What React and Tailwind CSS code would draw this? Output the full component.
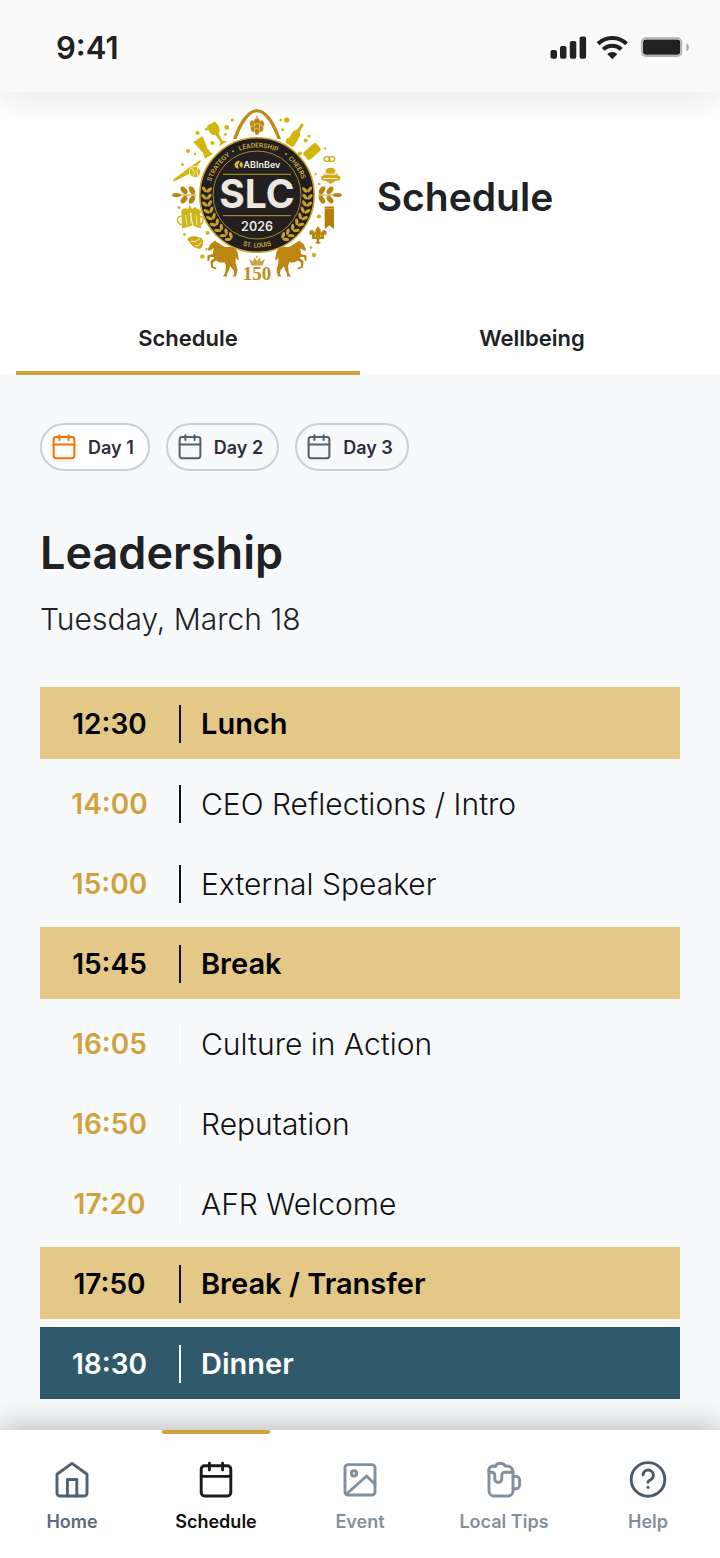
import React, { useState } from 'react';
import clsx from 'clsx';

const tabs = ['Schedule', 'Wellbeing'];
const days = ['Day 1', 'Day 2', 'Day 3'];

const sessions = [
    { time: '12:30', title: 'Lunch', type: 'break' },
    { time: '14:00', title: 'CEO Reflections / Intro', type: 'talk' },
    { time: '15:00', title: 'External Speaker', type: 'talk' },
    { time: '15:45', title: 'Break', type: 'break' },
    { time: '16:05', title: 'Culture in Action', type: 'talk', faint: true },
    { time: '16:50', title: 'Reputation', type: 'talk', faint: true },
    { time: '17:20', title: 'AFR Welcome', type: 'talk', faint: true },
    { time: '17:50', title: 'Break / Transfer', type: 'break' },
    { time: '18:30', title: 'Dinner', type: 'dinner' },
];

function Icon({ className, children }) {
    return (
        <svg viewBox="0 0 40 40" className={className} fill="none" stroke="currentColor" strokeWidth="2.9" strokeLinecap="round" strokeLinejoin="round" aria-hidden="true">
            {children}
        </svg>
    );
}

function HomeIcon({ className }) {
    return (
        <Icon className={className}>
            <path d="M5 14.2 20 3.4l15 10.800V33a3 3 0 0 1-3 3H8a3 3 0 0 1-3-3Z" />
            <path d="M15.4 36V19.500h9.400V36" />
        </Icon>
    );
}

function CalendarIcon({ className }) {
    return (
        <Icon className={className}>
            <rect x="5.2" y="5.8" width="29.6" height="30.2" rx="3.4" />
            <path d="M5.2 16.4h29.6M13.4 3.2v6.8M26.6 3.2v6.8" />
        </Icon>
    );
}

function ImageIcon({ className }) {
    return (
        <Icon className={className}>
            <rect x="5" y="4.6" width="30" height="30.4" rx="3" />
            <circle cx="14" cy="13.4" r="2.6" />
            <path d="M6.5 34 26.6 16l8.4 8.2" />
        </Icon>
    );
}

function BeerIcon({ className }) {
    return (
        <Icon className={className}>
            <path d="M5 12.2V31a5 5 0 0 0 5 5h14a5 5 0 0 0 5-5V12.2" />
            <path d="M29 16.400h3a3.600 3.600 0 0 1 3.600 3.600V25a3.800 3.800 0 0 1-3.800 3.800H29" />
            <path d="M5 12.2a4.600 4.600 0 0 1 4-6.200c1.200 0 1.800.2 2.400.5C12.300 4.200 14.200 3.200 16.300 3.200c2.200 0 4 1.200 4.900 2.900 3-.6 7.300.6 7.800 6.100h-8.200a3 3 0 0 0-3 3V19a3.500 3.500 0 0 1-7 0v-3.800a3 3 0 0 0-3-3Z" />
        </Icon>
    );
}

function HelpIcon({ className }) {
    return (
        <Icon className={className}>
            <circle cx="20" cy="19.4" r="16.8" />
            <path d="M15 14.800a5.200 5.200 0 1 1 7.600 5c-1.800.8-2.600 1.300-2.600 2.400" />
            <circle cx="20" cy="27.400" r="1.600" fill="currentColor" stroke="none" />
        </Icon>
    );
}

const navItems = [
    { label: 'Home', icon: HomeIcon, iconColor: 'text-[#50606e]', color: 'text-[#5c6b78]' },
    { label: 'Schedule', icon: CalendarIcon, iconColor: 'text-[#1a1a1c]', color: 'text-[#111113]' },
    { label: 'Event', icon: ImageIcon, iconColor: 'text-[#82909d]', color: 'text-[#82909d]' },
    { label: 'Local Tips', icon: BeerIcon, iconColor: 'text-[#82909d]', color: 'text-[#82909d]' },
    { label: 'Help', icon: HelpIcon, iconColor: 'text-[#4d5b68]', color: 'text-[#82909d]' },
];

function StatusBar() {
    return (
        <div className="relative z-10 flex h-23 items-center justify-between bg-[#fafafa] pt-1 pr-7 pl-14 text-[#202122] shadow-[0_8px_32px_rgba(0,0,0,0.09)]">
            <span className="text-[31px] leading-10 font-semibold">9:41</span>
            <svg viewBox="0 0 142 24" className="h-6 w-[142px]" fill="currentColor" aria-hidden="true">
                <rect x="0.5" y="14" width="6.5" height="8.8" rx="2" />
                <rect x="10" y="10" width="6.5" height="12.8" rx="2" />
                <rect x="19.8" y="5" width="6.5" height="17.8" rx="2" />
                <rect x="29.6" y="0.4" width="6.5" height="22.4" rx="2" />
                <g fill="none" stroke="currentColor" strokeWidth="4">
                    <path d="M48 7.800a20.500 20.500 0 0 1 28.600 0" />
                    <path d="M53.300 13.400a13 13 0 0 1 18 0" />
                </g>
                <path d="M57.200 18a7.600 7.600 0 0 1 10.200 0l-5.100 5.200Z" />
                <rect x="91.8" y="2.200" width="39.6" height="17.8" rx="4" fill="none" stroke="#b4b4b4" strokeWidth="1.8" />
                <rect x="93" y="3.400" width="37.2" height="15.4" rx="3" />
                <path d="M136.400 7.200v8q2.600-1.500 2.600-4t-2.600-4Z" fill="#a9a9a9" />
            </svg>
        </div>
    );
}

// one side of the laurel wreath inside the black ring
const laurelAngles = [-6, 2, 10, 18, 26, 34, 42, 50, 57];

function Laurel() {
    return (
        <g fill="#c9a227">
            {laurelAngles.map(a => (
                <g key={a} transform={`rotate(${a}) translate(50.5 0)`}>
                    <ellipse cx="-2.5" cy="0" rx="1.6" ry="3.4" transform="rotate(-40 -2.5 0)" />
                    <ellipse cx="2.5" cy="0" rx="1.6" ry="3.4" transform="rotate(40 2.5 0)" />
                </g>
            ))}
        </g>
    );
}

function Branch() {
    return (
        <g fill="#b8860b">
            <path d="M61-.4h20v.9H61Z" />
            <ellipse cx="65" cy="-4.6" rx="2.6" ry="4.4" transform="rotate(30 65 -4.6)" />
            <ellipse cx="65" cy="4.6" rx="2.6" ry="4.4" transform="rotate(-30 65 4.6)" />
            <ellipse cx="73" cy="-4.6" rx="2.6" ry="4.4" transform="rotate(38 73 -4.6)" />
            <ellipse cx="73" cy="4.6" rx="2.6" ry="4.4" transform="rotate(-38 73 4.6)" />
            <ellipse cx="80.5" cy="0" rx="4.4" ry="2.1" />
        </g>
    );
}

function Horse() {
    return (
        <path
            fill="#bd8512"
            d="M-42 45.500-40.500 47C-37 48-35 51.500-31 52C-27 52-23 51.500-20.500 55C-18.500 58-19 62-18 65C-20 65-21.500 63-21.500 61C-21 65-22 68-20.500 71L-19.500 75-21 81.500H-24.500L-22.800 79-23.300 75.500-27 71-28 75-30 79V81.500H-34L-31.800 78-31 71-32.500 67C-35 68.500-39 67-41 65.500L-44 67.500V71.500L-40.500 73-41 74.500-46 72.500-46.500 66-43 63.500-43.500 62H-47L-48 66H-49.500V60.500L-44 59C-43.500 56-44 54.500-43 53L-46 55-48.500 56-49 54-46.500 49Z"
        />
    );
}

const yellowDots = [
    [-24.7, -75, 1.6], [-30.3, -67.5, 2.4], [-31.5, -60.5, 1.4], [-44.5, -52, 2], [-50.5, -66, 1.6],
    [-59.5, -62, 2.1], [-69, -44, 2.1], [-74.5, -30.5, 1.4], [-62, -41, 1.2], [23.7, -75, 1.3], [29.7, -75, 2.6],
    [25.7, -65.5, 1.5], [32, -54, 3.1], [48.7, -54.5, 2], [52, -59, 1.5], [43, -41.5, 2], [68, -46.5, 1.2],
    [58.7, -21, 1.2], [62.3, -11, 1.3], [-78, 12.5, 1.5], [-72.5, 39.5, 1.4], [-49.5, 38, 2], [-50.5, 54, 1.3],
    [-54.7, 61.5, 2.2], [62, 21.5, 2.1], [54, 52.5, 1.3], [57, 60, 2.2],
];

function EventLogo() {
    return (
        <svg viewBox="-90 -90 180 180" className="size-45 shrink-0" role="img" aria-label="ABInBev SLC 2026">
            <defs>
                <path id="ringTop" d="M-47.5 0A47.5 47.5 0 0 1 47.500 0" />
                <path id="ringBottom" d="M-52.5 0A52.5 52.5 0 0 0 52.500 0" />
            </defs>

            {/* arch and hop */}
            <path d="M-24-56C-17-76-8.500-85.800 0-85.800S17-76 24-56h-3.500C14-73 7-82.800 0-82.800S-14-73-20.500-56Z" fill="#c38a10" />
            <g fill="#b8860b" stroke="#fff" strokeWidth="0.4">
                <path d="M0-79v4" stroke="#b8860b" strokeWidth="1.2" />
                <ellipse cx="-4.3" cy="-71" rx="3" ry="3.8" />
                <ellipse cx="4.3" cy="-71" rx="3" ry="3.8" />
                <ellipse cx="0" cy="-73" rx="3.2" ry="4" />
                <ellipse cx="-3.5" cy="-66.5" rx="3" ry="3.6" />
                <ellipse cx="3.5" cy="-66.5" rx="3" ry="3.6" />
                <ellipse cx="0" cy="-68" rx="2.8" ry="3.6" />
                <ellipse cx="0" cy="-63.5" rx="2.6" ry="3.4" />
            </g>

            {yellowDots.map(([x, y, r]) => (
                <circle key={`${x},${y}`} cx={x} cy={y} r={r} fill="#d2b414" />
            ))}

            <g fill="#d2b70a">
                {/* goblet and pint glass */}
                <path d="M-4.500-12h9c1.800 5.500 1.200 10.500-2.800 12.500L1.200 9 5 11.500H-5L-1.200 9-1.700.5C-5.700-1.500-6.300-6.500-4.500-12Z" transform="translate(-40 -61) rotate(-31)" />
                <path d="M-5.500-10.500h11L4-2 3 3.500l1.500 6.500h-9L-3 3.500-4-2Z" transform="translate(-53.5 -47) rotate(-32)" />
                {/* bat and ball */}
                <path d="M-84-15.200-83-13.600-65-22.500-56-34-57-35-69-26.500Z" />
                <circle cx="-62" cy="-23" r="5.6" stroke="#fff" strokeWidth="0.8" />
                <path d="M-65-27q3.500 4 1.500 9M-59-27.500q-2.500 4 0 8.500" fill="none" stroke="#fff" strokeWidth="0.8" />
                {/* bottle and can */}
                <path d="M-1.500-13.500h3v8C4-4 4.200-2 4.200 0v10q0 1.500-1.500 1.500h-5.400Q-4.200 11.500-4.200 10V0c0-2 .2-4 2.700-5.500Z" transform="translate(38.5 -59.5) rotate(32)" />
                <path d="M-3.800-8.500h7.600L5-6.500v13L3.800 8.500h-7.600L-5 6.500v-13Z" transform="translate(55 -43.5) rotate(48)" />
            </g>

            {/* pretzel */}
            <g fill="none" stroke="#d2ac14" strokeWidth="1.4">
                <ellipse cx="70" cy="-36" rx="2.9" ry="2.4" />
                <ellipse cx="74.8" cy="-36" rx="2.9" ry="2.4" />
            </g>

            {/* bees */}
            <g fill="#d2a814">
                <ellipse cx="73.5" cy="-24" rx="5" ry="3.3" />
                <ellipse cx="68" cy="-17" rx="4" ry="2.8" />
                <ellipse cx="79.5" cy="-17" rx="4" ry="2.8" />
                <path d="M66.500-21.500h14.500q-.5 7.500-7.500 10.500-6.500-3-7-10.500Z" />
                <path d="M67-20.800h13M66.500-16.500h14" stroke="#fff" strokeWidth="0.9" />
                <ellipse cx="-63" cy="44.5" rx="6.5" ry="3.2" />
                <path d="M-67.500 47.500q5-7 12-4.500 3.500 5-.5 10.500-6 1.500-11.500-6Z" />
                <path d="M-66 46.500q5 1 9-3M-62 51q4 0 6.500-3.500" fill="none" stroke="#fff" strokeWidth="0.8" />
            </g>

            {/* clinking mugs */}
            <g fill="#cfb41a">
                <path d="M-75.500 18.500-67.500 16-64.500 30.500-75 33.500Z" />
                <path d="M-58-17Z M-57 18.500-65 16-66 20-63.500 31-56 33.500Z" />
                <path d="M-76 18.500l1-4 4-1.500 2 1.500 1.500-4.500 2.500 4 3-2 2.500 2 3 1 .5 3.500-8-.8Z" />
                <path d="M-75.500 21.500q-4-.5-4 3t4 5.500M-57 21.500q3-.5 3 3t-2.500 5.500" fill="none" stroke="#cfb41a" strokeWidth="1.5" />
                <path d="M-71.500 20l1.500 10M-61 20l1 10M-66 18v11" stroke="#fff" strokeWidth="0.6" />
            </g>

            <Branch />
            <g transform="scale(-1 1)"><Branch /></g>

            {/* ribbon */}
            <path d="M67.700 11.500h9.300v22.500l-4.600-3.500-4.700 3.500Z" fill="#b57f0c" />
            <path d="M67.700 13.500h9.300" stroke="#d9b95c" strokeWidth="0.7" />

            {/* fleur-de-lis */}
            <g fill="#b8860b">
                <path d="M61 31q-5 6-1.800 11h3.600q3.200-5-1.800-11Z" />
                <path d="M58.500 42.500q0-7.500-4-7.500-3.500 1-1.500 5 1.500-1 2 .2.500 1.500-.5 2.500ZM63.500 42.500q0-7.500 4-7.500 3.500 1 1.500 5-1.500-1-2 .2-.5 1.500.5 2.500Z" />
                <path d="M55 42h12v1.900H55ZM59.500 44h3l-.5 2.500 2 1-3 1.800-3-1.800 2-1Z" />
            </g>

            {/* badge */}
            <circle r="57.2" fill="#231f20" stroke="#c9a227" strokeWidth="1.6" />
            <circle r="44" fill="none" stroke="#b8962a" strokeWidth="0.9" />
            <Laurel />
            <g transform="scale(-1 1)"><Laurel /></g>
            <circle cx="-24" cy="-43.7" r="1" fill="#c9a83a" />
            <circle cx="29" cy="-41" r="1" fill="#c9a83a" />
            <g fill="#c9a83a" fontSize="6.6" fontWeight="600" className="font-[Roboto,sans-serif]">
                <text><textPath href="#ringTop" startOffset="20%" textAnchor="middle">STRATEGY</textPath></text>
                <text><textPath href="#ringTop" startOffset="51%" textAnchor="middle">LEADERSHIP</textPath></text>
                <text><textPath href="#ringTop" startOffset="81%" textAnchor="middle">CHEERS</textPath></text>
                <text><textPath href="#ringBottom" startOffset="50%" textAnchor="middle">ST. LOUIS</textPath></text>
            </g>

            {/* brand line */}
            <path d="M-22.500-30.500q2-4.500 5.500-3.500l-2.500 4 1.500 3.500q-4 .5-4.500-4ZM-16-33.500q3.500 3 .5 6.500l-2.500-3Z" fill="#e0c020" />
            <text x="-13.5" y="-27.4" fontSize="9" fontWeight="600" fill="#f3f0ea">ABInBev</text>
            <path d="M-34-20.700h68M-34 20.700h68" stroke="#b5a524" strokeWidth="1" />
            <text x="0" y="13" textAnchor="middle" fontSize="39" fontWeight="700" fill="#ebe8e2">SLC</text>
            <text x="0" y="36" textAnchor="middle" fontSize="12.5" fontWeight="600" fill="#ebe8e2">2026</text>

            <Horse />
            <g transform="scale(-1 1)"><Horse /></g>
            <path d="M-5.500 70.500-8 64l4 2.500 1.500-4L0 66l2.500-3.500 1.500 4L8 64l-2.500 6.500Z" fill="#c9a244" />
            <circle cx="0" cy="62" r="1" fill="#c9a244" />
            <text x="0" y="85" textAnchor="middle" fontSize="19" fontWeight="700" fill="#bd8c1c" className="font-['Liberation_Serif',serif]">150</text>
        </svg>
    );
}

function SessionRow({ session }) {
    const isBreak = session.type === 'break';
    const isDinner = session.type === 'dinner';

    return (
        <li
            className={clsx(
                'flex h-18 items-center pt-0.5 leading-10',
                isBreak && 'bg-[#e3c888] text-[29px] font-semibold text-black',
                isDinner && 'bg-[#305a6c] text-[29px] font-semibold text-white',
                session.type === 'talk' && 'text-[30px] font-light text-[#111113]'
            )}
        >
            <time className={clsx('w-[139px] text-center text-[28px] font-semibold', session.type === 'talk' && 'text-[#cfa23b]')}>
                {session.time}
            </time>
            <span className={clsx('h-[38px] w-0.5', isDinner || session.faint ? 'bg-white' : 'bg-[#111113]')} />
            <span className="pl-5">{session.title}</span>
        </li>
    );
}

export default function App() {
    const [tab, setTab] = useState('Schedule');
    const [day, setDay] = useState('Day 1');
    const [page, setPage] = useState('Schedule');

    return (
        <div className="flex min-h-screen flex-col bg-[#f8f9fb] font-[Inter,sans-serif] text-[#202124]">
            <StatusBar />

            <header className="bg-white px-4 pt-[13px]">
                <div className="flex items-center justify-center gap-[30px]">
                    <EventLogo />
                    <h1 className="pt-1 text-[39px] leading-12 font-semibold">Schedule</h1>
                </div>
                <div className="mt-5 flex">
                    {tabs.map(name => (
                        <button
                            key={name}
                            type="button"
                            onClick={() => setTab(name)}
                            className={clsx('h-[70px] flex-1 border-b-4 text-[22px] font-semibold', tab === name ? 'border-[#cfa23b]' : 'border-transparent')}
                        >
                            {name}
                        </button>
                    ))}
                </div>
            </header>

            <main className="flex-1 px-10 pt-12 pb-[30px]">
                <div className="flex gap-4">
                    {days.map(name => (
                        <button
                            key={name}
                            type="button"
                            onClick={() => setDay(name)}
                            className={clsx('flex h-12 items-center gap-2.5 rounded-full border-2 border-[#c8d0d5] pr-3.5 pl-2 text-[18px] font-semibold text-[#2f2d3a]', day === name && 'bg-white')}
                        >
                            <CalendarIcon className={clsx('size-7', day === name ? 'text-[#f97000]' : 'text-[#50606e]')} />
                            {name}
                        </button>
                    ))}
                </div>

                <h2 className="mt-13 text-[45px] leading-15 font-semibold">Leadership</h2>
                <p className="mt-4 text-[30px] leading-10 font-light">Tuesday, March 18</p>

                <ul className="mt-12 flex flex-col gap-2">
                    {sessions.map(s => (
                        <SessionRow key={s.time} session={s} />
                    ))}
                </ul>
            </main>

            <nav className="flex h-32 bg-white shadow-[0_-4px_28px_rgba(0,0,0,0.25)]">
                {navItems.map(({ label, icon: NavIcon, iconColor, color }) => (
                    <button key={label} type="button" onClick={() => setPage(label)} className="flex flex-1 flex-col items-center">
                        <span className={clsx('h-1 w-3/4 rounded-sm', page === label && 'bg-[#cfa23b]')} />
                        <NavIcon className={clsx('mt-[26px] size-10', iconColor)} />
                        <span className={clsx('mt-2 text-[18px] leading-7 font-semibold', color)}>{label}</span>
                    </button>
                ))}
            </nav>
        </div>
    );
}
